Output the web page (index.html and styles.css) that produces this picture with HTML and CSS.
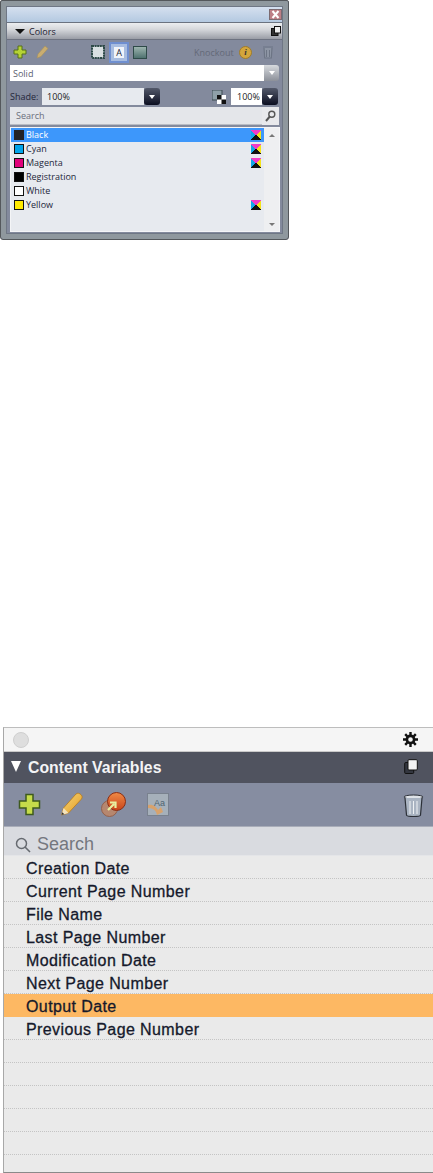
FILE: index.html
```html
<!DOCTYPE html>
<html lang="en">
<head>
<meta charset="utf-8">
<title>Panels</title>
<link rel="stylesheet" href="styles.css">
</head>
<body>
<svg class="defs" width="0" height="0">
  <defs>
    <linearGradient id="penc" x1="0" y1="0" x2="1" y2="1"><stop offset="0" stop-color="#f6d77c"/><stop offset="1" stop-color="#e39a1e"/></linearGradient>
    <linearGradient id="orb" x1="0" y1="0" x2="0" y2="1"><stop offset="0" stop-color="#f08a45"/><stop offset="1" stop-color="#c9441a"/></linearGradient>
  </defs>
</svg>
<section class="old">
  <div class="old-title">
    <span class="close"><svg width="11" height="9" viewBox="0 0 11 9"><path d="M2.500 1l6 7M8.500 1l-6 7" stroke="#fff" stroke-width="2"/></svg></span>
  </div>
  <div class="old-head">
    <span class="old-tri"></span><span class="old-name">Colors</span>
    <svg class="old-copy" width="10" height="10" viewBox="0 0 10 10"><rect x="0.500" y="2.500" width="6.500" height="7" fill="#333" stroke="#111"/><rect x="3.500" y="0.500" width="6" height="6.500" fill="#eee" stroke="#111"/></svg>
  </div>
  <div class="old-tools">
    <svg class="t-plus" width="14" height="14" viewBox="0 0 14 14"><path d="M5 1h4v4h4v4H9v4H5V9H1V5h4z" fill="#b5d334" stroke="#56701a"/></svg>
    <svg class="t-pen" width="13" height="14" viewBox="0 0 13 14"><path d="M1 13l1-4 7-8 3 2.500-7 8z" fill="#c9ad70" stroke="#a8905a" stroke-width=".6"/></svg>
    <svg class="t-frame" width="14" height="14" viewBox="0 0 14 14"><rect x="1" y="1" width="12" height="12" fill="#d9e0e2" stroke="#2e4a48" stroke-width="2" stroke-dasharray="2 .6"/></svg>
    <span class="t-a">A</span>
    <span class="t-fill"></span>
    <span class="ko">Knockout</span>
    <span class="info">i</span>
    <svg class="t-trash" width="12" height="14" viewBox="0 0 12 14"><path d="M1 2h10M2 3l.7 10h6.600L10 3" fill="#8d95a4" stroke="#6d7585" stroke-width="1.200"/><path d="M4.500 5v7M7.500 5v7" stroke="#6d7585"/></svg>
  </div>
  <div class="old-field solid">
    <span class="field-box wide">Solid</span>
    <span class="drop pale"><i></i></span>
  </div>
  <div class="old-shade">
    <span class="shade-label">Shade:</span>
    <span class="field-box shade-in">100%</span>
    <span class="drop dark"><i></i></span>
    <svg class="t-check" width="14" height="14" viewBox="0 0 14 14"><rect x="0" y="0" width="10" height="10" fill="#8fa0a8" stroke="#3d4b52"/><rect x="5" y="5" width="9" height="9" fill="#fff"/><path d="M5 5h4.500v4.500H5zM9.500 9.500H14V14H9.500z" fill="#111"/></svg>
    <span class="field-box pct">100%</span>
    <span class="drop dark"><i></i></span>
  </div>
  <div class="old-search">
    <span class="search-box">Search</span>
    <span class="search-btn"><svg width="11" height="12" viewBox="0 0 11 12"><circle cx="6.800" cy="4.200" r="3" fill="none" stroke="#555" stroke-width="1.400"/><path d="M4.800 6.500L1 11" stroke="#555" stroke-width="2"/></svg></span>
  </div>
  <div class="old-list">
    <ul class="old-rows">
      <li class="old-row on"><span class="sw k"></span><span class="lab">Black</span><span class="cmyk"></span></li>
      <li class="old-row"><span class="sw c"></span><span class="lab">Cyan</span><span class="cmyk"></span></li>
      <li class="old-row"><span class="sw m"></span><span class="lab">Magenta</span><span class="cmyk"></span></li>
      <li class="old-row"><span class="sw r"></span><span class="lab">Registration</span></li>
      <li class="old-row"><span class="sw w"></span><span class="lab">White</span></li>
      <li class="old-row"><span class="sw y"></span><span class="lab">Yellow</span><span class="cmyk"></span></li>
    </ul>
    <div class="old-scroll"><span class="arr up"></span><span class="arr down"></span></div>
  </div>
</section>

<section class="mac">
  <div class="mac-title">
    <span class="dot"></span>
    <svg class="gear" width="15" height="15" viewBox="0 0 15 15"><circle cx="7.500" cy="7.500" r="3.600" fill="none" stroke="#111" stroke-width="2.600"/><path d="M7.500 0v3M7.500 12v3M0 7.500h3M12 7.500h3M2.200 2.200l2.100 2.100M10.700 10.700l2.100 2.100M12.800 2.200l-2.100 2.100M4.300 10.700l-2.100 2.100" stroke="#111" stroke-width="2.400"/></svg>
  </div>
  <div class="mac-head">
    <span class="mac-tri"></span><span class="mac-name">Content Variables</span>
    <svg class="mac-copy" width="14" height="15" viewBox="0 0 14 15"><rect x="0.700" y="3.500" width="9" height="11" rx="1" fill="#33363f" stroke="#111"/><rect x="4" y="0.700" width="9.300" height="10.300" rx="1" fill="#f4f4f4" stroke="#111"/></svg>
  </div>
  <div class="mac-tools">
    <svg class="m-plus" width="23" height="23" viewBox="0 0 23 23"><path d="M8 1.500h7v6.500h6.500v7H15v6.500H8V15H1.500V8H8z" fill="#c6dc4a" stroke="#3e5a1e" stroke-width="1.500"/></svg>
    <svg class="m-pen" width="23" height="25" viewBox="0 0 23 25"><path d="M1.500 23l2-7L16 2c1.500-1.300 3.500-.8 5 .7s1.500 3 .3 4.500L8.500 21z" fill="url(#penc)" stroke="#b5791d" stroke-width=".8"/><path d="M1.500 23l2-7 5 5z" fill="#f4e3bd"/><path d="M1.500 23l.8-2.800 2 2z" fill="#333"/></svg>
    <svg class="m-orb" width="25" height="26" viewBox="0 0 25 26"><circle cx="8.500" cy="16.500" r="8" fill="#b6876f" stroke="#93604c"/><circle cx="15.500" cy="9.500" r="9" fill="url(#orb)" stroke="#8c2e12"/><path d="M7 18l6-6M9 10.500h5.500V16" fill="none" stroke="#e8f0a0" stroke-width="2.200"/></svg>
    <svg class="m-aa" width="22" height="23" viewBox="0 0 22 23"><rect x="0.500" y="0.500" width="21" height="22" fill="#a6b0ba" stroke="#79818e"/><path d="M1 12c5-1 8 2 10 5l3-3 2 5-6 3-1-3c-2-3-4-4-8-4z" fill="#d8a26c"/><text x="7" y="13" class="aa-text">Aa</text></svg>
    <svg class="m-trash" width="21" height="24" viewBox="0 0 21 24"><ellipse cx="10.500" cy="4" rx="9.500" ry="2" fill="#dfe3e8" stroke="#2c3038"/><path d="M2 5l1.500 17c0 1 3 1.500 7 1.500s7-.5 7-1.500L19 5" fill="#aab4c2" stroke="#2c3038" stroke-width="1.200"/><path d="M7 8v13M10.500 8v13M14 8v13" stroke="#eef1f4"/></svg>
  </div>
  <div class="mac-search">
    <svg class="lens" width="16" height="16" viewBox="0 0 16 16"><circle cx="6.500" cy="6.500" r="5" fill="none" stroke="#666a70" stroke-width="1.500"/><path d="M10 10l5 5" stroke="#666a70" stroke-width="1.600"/></svg>
    <span class="search-word">Search</span>
  </div>
  <ul class="mac-rows">
    <li class="mac-row">Creation Date</li>
    <li class="mac-row">Current Page Number</li>
    <li class="mac-row">File Name</li>
    <li class="mac-row">Last Page Number</li>
    <li class="mac-row">Modification Date</li>
    <li class="mac-row">Next Page Number</li>
    <li class="mac-row sel">Output Date</li>
    <li class="mac-row">Previous Page Number</li>
    <li class="mac-row"></li>
    <li class="mac-row"></li>
    <li class="mac-row"></li>
    <li class="mac-row"></li>
    <li class="mac-row"></li>
    <li class="mac-row last"></li>
  </ul>
</section>
</body>
</html>
```
FILE: styles.css
```css
* { box-sizing: border-box; }
html, body { margin: 0; padding: 0; background: #fff; }
body { width: 433px; height: 1173px; overflow: hidden; position: relative; font-family: "Liberation Sans", Arial, sans-serif; }
ul { list-style: none; margin: 0; padding: 0; }
svg { display: block; flex: none; }
.defs { position: absolute; }

/* Old style panel */
.old {
  width: 289px; height: 240px; margin-bottom: 487px;
  background: #838a9d;
  border: 1px solid #54585c;
  border-radius: 2px 2px 3px 3px;
  box-shadow: inset 0 0 0 5px #8f989e, inset 0 0 0 6px #6f7785;
  padding: 6px 6px 7px 6px;
  font-size: 9px; color: #23263a;
  font-family: "Open Sans", "Liberation Sans", sans-serif;
  display: flex; flex-direction: column;
}
.old-title { height: 16px; background: linear-gradient(#d5e0ef, #b4c9e1); display: flex; justify-content: flex-end; align-items: center; flex: none; border-bottom: 1px solid #6b7380; }
.close { width: 13px; height: 11px; background: #bd7f86; border: 1px solid #7c6a70; display: flex; }
.old-head { height: 17px; background: linear-gradient(#eceef0 0, #d5d7db 40%, #9a9da6 100%); display: flex; align-items: center; padding: 0 1px 0 8px; flex: none; border-bottom: 1px solid #6d7280; }
.old-tri { width: 0; height: 0; border-left: 5px solid transparent; border-right: 5px solid transparent; border-top: 5px solid #111; }
.old-name { margin-left: 4px; font-size: 9px; color: #1c2030; }
.old-copy { margin-left: auto; }
.old-tools { height: 24px; display: flex; align-items: center; flex: none; padding-left: 6px; }
.t-pen { margin-left: 9px; }
.t-frame { margin-left: 42px; }
.t-a { width: 20px; height: 21px; margin-left: 4px; border: 2px solid #6f8fd0; background: #f0f4fa; box-shadow: inset 0 0 0 3px #a8bde0; display: flex; align-items: center; justify-content: center; font-size: 9px; color: #223; }
.t-fill { width: 14px; height: 13px; margin-left: 4px; background: linear-gradient(#9cb4ae, #4f7270); border: 1px solid #2e4a48; }
.ko { margin-left: 47px; color: #646978; font-size: 9px; width: 39px; white-space: nowrap; }
.info { width: 13px; height: 13px; margin-left: 6px; border-radius: 50%; background: #d3a63c; border: 1px solid #a07c2a; color: #333; font: italic 700 9px/11px "Liberation Serif", serif; text-align: center; }
.t-trash { margin-left: 10px; }
.old-field { display: flex; margin: 1px 0 0 3px; height: 16px; flex: none; }
.field-box { background: #fff; display: flex; align-items: center; padding-left: 3px; }
.wide { width: 254px; color: #5a6070; }
.drop { width: 16px; display: flex; align-items: center; justify-content: center; border-radius: 0 3px 3px 0; }
.drop i { width: 0; height: 0; border-left: 3px solid transparent; border-right: 3px solid transparent; border-top: 4px solid #fff; }
.pale { width: 15px; background: linear-gradient(#d7dade, #8c9099); }
.dark { background: linear-gradient(#53596a, #0b0e20); border-radius: 3px; height: 17px; }
.old-shade { display: flex; align-items: center; margin: 7px 0 0 3px; height: 17px; flex: none; }
.shade-label { width: 32px; color: #23263a; }
.shade-in { width: 102px; height: 17px; background: #e7eaef; padding-left: 5px; color: #222; }
.t-check { margin-left: 52px; }
.pct { width: 31px; height: 17px; margin-left: 5px; padding-left: 6px; color: #222; }
.old-search { display: flex; margin: 2px 0 0 3px; height: 18px; flex: none; }
.search-box { width: 252px; background: #e4e6ea; color: #6a6f7c; display: flex; align-items: center; padding-left: 6px; border-bottom: 1px solid #b9bcc4; }
.search-btn { width: 17px; background: #e8e9ec; display: flex; align-items: center; justify-content: center; }
.old-list { margin: 2px 0 0 3px; display: flex; height: 105px; width: 270px; flex: none; border: 1px solid #f4f5f7; background: #e7eaef; }
.old-rows { width: 253px; flex: none; }
.old-row { height: 14px; display: flex; align-items: center; padding: 0 3px 1px 3px; }
.old-row.on { background: #3d97fb; color: #fff; }
.sw { width: 10px; height: 10px; border: 1.500px solid #111; flex: none; }
.k { background: #222; border-color: #ccc; outline: 1px solid #222; outline-offset: -1px; }
.c { background: #00a4ea; }
.m { background: #e0007a; }
.r { background: #000; }
.w { background: #fff; }
.y { background: #ffe900; }
.lab { margin-left: 2px; }
.cmyk {
  margin-left: auto; width: 10px; height: 10px; flex: none;
  background: conic-gradient(#f03cc8 0 50deg, #f4e21a 50deg 130deg, #111 130deg 230deg, #12a6e8 230deg 310deg, #f03cc8 310deg);
}
.old-scroll { flex: 1; background: #eeeff1; display: flex; flex-direction: column; align-items: center; justify-content: space-between; padding: 6px 0 5px; }
.arr { width: 0; height: 0; border-left: 3px solid transparent; border-right: 3px solid transparent; }
.up { border-bottom: 3px solid #777; }
.down { border-top: 3px solid #777; }

/* Mac style panel */
.mac { margin-left: 3px; width: 430px; height: 446px; background: #eaeaea; border-top: 1px solid #bdbdbd; border-left: 1px solid #a8a8a8; border-bottom: 1px solid #8a8a8a; display: flex; flex-direction: column; }
.mac-title { height: 24px; flex: none; background: #f5f5f5; border-bottom: 1px solid #c9c9c9; display: flex; align-items: center; padding: 0 15px 0 9px; justify-content: space-between; }
.dot { width: 16px; height: 16px; border-radius: 50%; background: #dedede; border: 1px solid #cfcfcf; }
.mac-head { height: 31px; flex: none; background: #50535f; display: flex; align-items: center; padding: 0 15px 0 7px; }
.mac-tri { width: 0; height: 0; border-left: 5.500px solid transparent; border-right: 5.500px solid transparent; border-top: 11px solid #fff; margin-bottom: 3px; }
.mac-name { margin-left: 7px; color: #f4f4f6; font-weight: 700; font-size: 15.800px; }
.mac-copy { margin-left: auto; margin-bottom: 2px; }
.mac-tools { height: 44px; flex: none; background: #868da1; border-bottom: 1px solid #a9adb9; display: flex; align-items: center; padding: 0 9px 0 14px; }
.m-pen { margin-left: 19px; }
.m-orb { margin-left: 18px; }
.m-aa { margin-left: 21px; }
.m-trash { margin-left: auto; }
.aa-text { font: 9px "Liberation Sans", sans-serif; fill: #4f6470; }
.mac-search { height: 29px; flex: none; background: #d9dbe0; display: flex; align-items: center; padding: 7px 0 0 11px; border-bottom: 1px solid #e4e5e8; }
.search-word { margin-left: 6px; font-size: 18px; color: #74777e; }
.mac-rows { flex: 1; }
.mac-row { height: 23px; padding: 2px 0 0 22px; border-bottom: 1px dotted #c4c4c4; font-size: 16px; letter-spacing: .4px; line-height: 22px; color: #15192b; -webkit-text-stroke: .3px #15192b; white-space: nowrap; }
.mac-row.sel { background: #fdb863; border-bottom-color: #fdb863; }
.mac-row.last { border-bottom: 0; }
```
